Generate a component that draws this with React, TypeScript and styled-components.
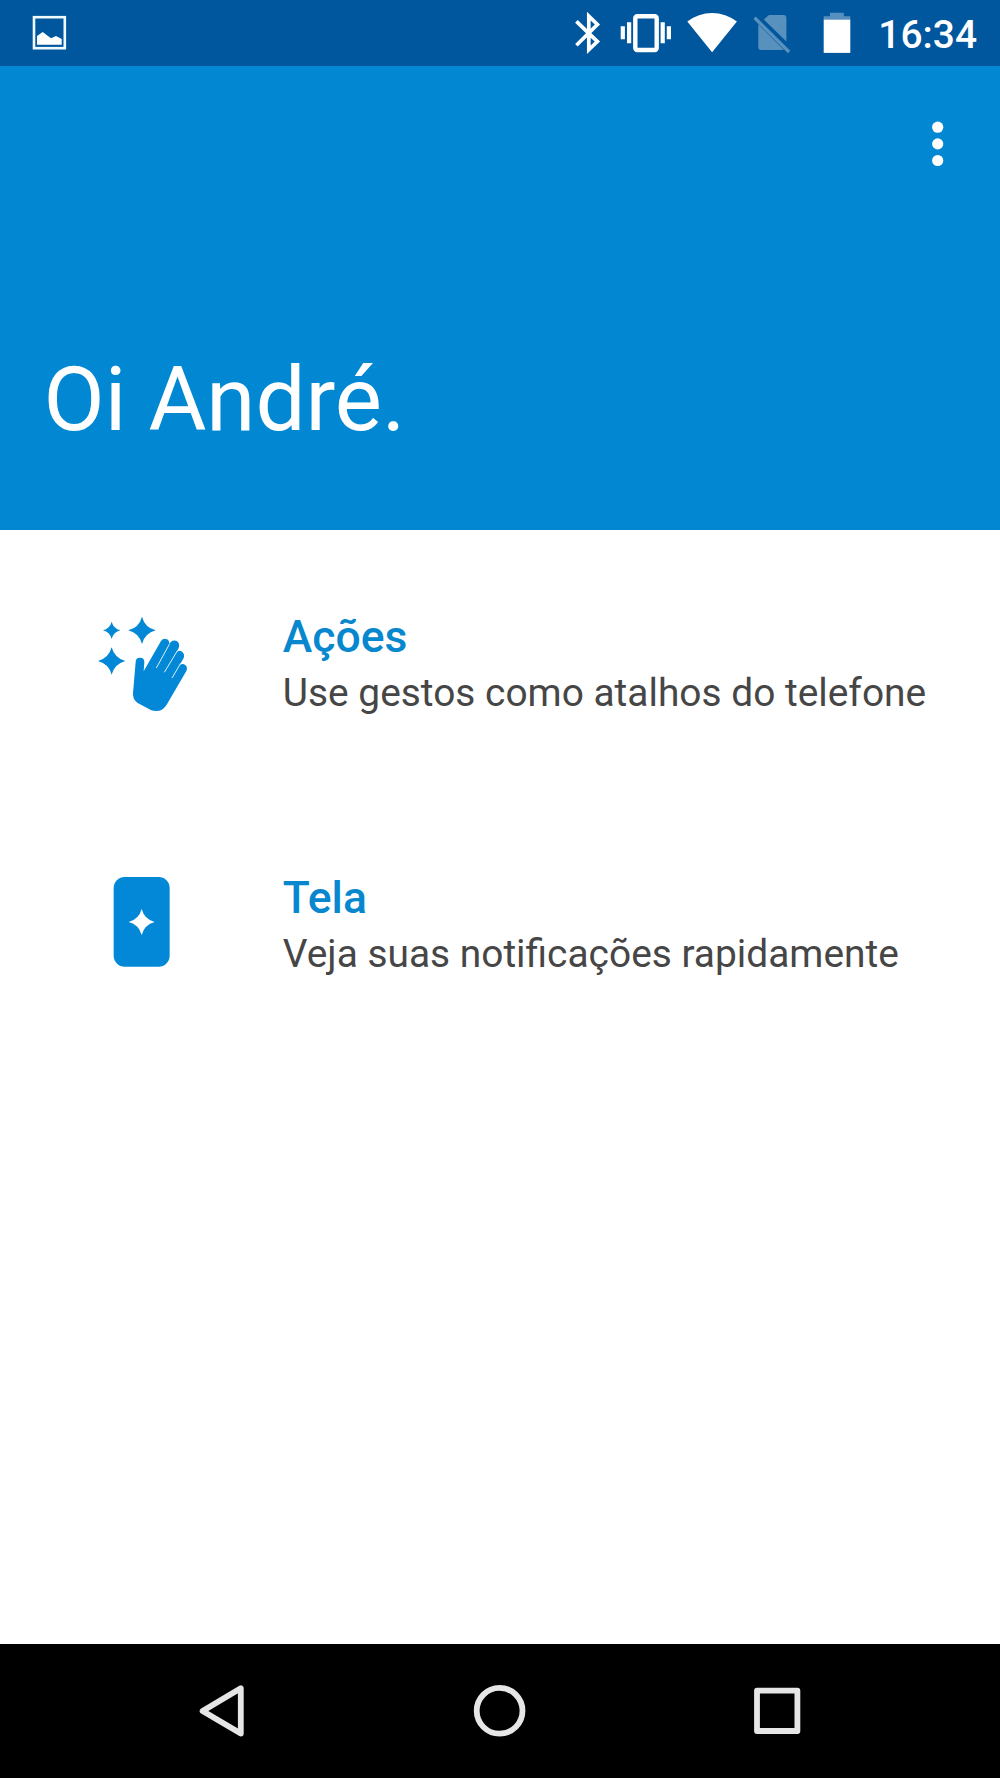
import React from 'react';
import styled, { createGlobalStyle } from 'styled-components';

const GlobalStyle = createGlobalStyle`
  * { box-sizing: border-box; }
  body { margin: 0; background: #fff; }
  h1, h2, p { margin: 0; }
`;

const Screen = styled.div`
  display: flex;
  flex-direction: column;
  width: 1000px;
  height: 1778px;
  overflow: hidden;
  background: #fff;
  font-family: Roboto, 'Liberation Sans', sans-serif;
`;

const StatusBar = styled.div`
  display: flex;
  flex: none;
  align-items: flex-start;
  height: 66px;
  padding: 0 23px 0 30px;
  background: #01579d;
  color: #fff;
`;

const StatusSpacer = styled.div`
  flex: 1;
`;

const StatusIcon = styled.svg<{ $gap?: number }>`
  display: block;
  flex: none;
  height: 66px;
  margin-right: ${({ $gap = 0 }) => $gap}px;
  fill: #fff;
`;

const Clock = styled.time`
  width: 125px;
  margin-top: 12px;
  font-size: 38.89px;
  font-weight: 500;
  line-height: 46px;
  text-align: right;
`;

const Header = styled.header`
  display: flex;
  flex: none;
  flex-direction: column;
  justify-content: space-between;
  height: 464px;
  padding: 44px 44.8px 78px 43.6px;
  background: #0288d3;
  color: #fff;
`;

const MenuButton = styled.button`
  align-self: flex-end;
  width: 34px;
  height: 68px;
  padding: 0;
  border: 0;
  background: none;

  svg {
    display: block;
    fill: #fff;
  }
`;

const Greeting = styled.h1`
  font-size: 88.89px;
  font-weight: 400;
  line-height: 104px;
`;

const FeatureList = styled.main`
  flex: 1;
`;

const Feature = styled.section`
  display: grid;
  grid-template-columns: 282.8px 1fr;
  align-items: start;
  height: 261px;
  padding-top: 71px;
`;

const FeatureIcon = styled.svg`
  display: block;
  width: 120px;
  height: 120px;
  margin-left: 82px;
  fill: #0288d6;
`;

const FeatureText = styled.div`
  display: grid;
  gap: 7px;
  padding-top: 10px;
  white-space: nowrap;
`;

const FeatureTitle = styled.h2`
  color: #0787ce;
  font-size: 44.44px;
  font-weight: 500;
  line-height: 52px;
`;

const FeatureSummary = styled.p`
  color: #464646;
  font-size: 38.89px;
  line-height: 46px;
`;

const NavBar = styled.nav`
  display: grid;
  flex: none;
  grid-template-columns: repeat(3, 278px);
  justify-content: center;
  place-items: center;
  height: 134px;
  background: #000;
`;

const NavIcon = styled.svg`
  display: block;
  width: 68px;
  height: 68px;
  fill: none;
  stroke: #e6e6e6;
  stroke-width: 5.8;
  stroke-linejoin: round;
`;

const sparkle = (cx: number, cy: number, r: number) => {
  const k = r * 0.21;
  return `M${cx} ${cy - r}Q${cx + k} ${cy - k} ${cx + r} ${cy}Q${cx + k} ${cy + k} ${cx} ${cy + r}Q${cx - k} ${cy + k} ${cx - r} ${cy}Q${cx - k} ${cy - k} ${cx} ${cy - r}Z`;
};

const PictureIcon = () => (
  <StatusIcon width="40" viewBox="30 0 40 66">
    <rect x="34" y="17.2" width="30.8" height="31" fill="none" stroke="#eefaff" strokeWidth="2.6" />
    <path d="M37 44.7V36L42.7 32L48.3 36.3L51 38.2L56 36L61.7 39V44.7Z" />
  </StatusIcon>
);

const BluetoothIcon = () => (
  <StatusIcon width="31" viewBox="572 0 31 66" $gap={15}>
    <path
      d="M576.4 21.3L597.4 41.6L588.8 49.8V16.2L597.4 24.5L576.4 45.2"
      fill="none"
      stroke="#fff"
      strokeWidth="3.7"
    />
  </StatusIcon>
);

const VibrateIcon = () => (
  <StatusIcon width="56" viewBox="618 0 56 66" $gap={11}>
    <rect x="635.3" y="16.2" width="21.4" height="33.8" rx="2" fill="none" stroke="#fff" strokeWidth="4.4" />
    <path d="M620.7 26.3h4.2v13h-4.2zM627 22.3h4.2v21H627zM660.6 22.3h4.2v21h-4.2zM666.8 26.3h4.2v13h-4.2z" />
  </StatusIcon>
);

const WifiIcon = () => (
  <StatusIcon width="55" viewBox="685 0 55 66" $gap={12}>
    <path d="M687.3 21.5A40.5 40.5 0 0 1 736.9 21.5L712.1 52.3Z" />
  </StatusIcon>
);

const NoSimIcon = () => (
  <StatusIcon width="40" viewBox="752 0 40 66" $gap={30}>
    <g opacity="0.34">
      <path d="M769 14.9H783.4Q786.4 14.9 786.4 17.9V41.5L763.8 19.4Z" />
      <path d="M758.3 24.3L784 50H761.2Q758.3 50 758.3 47Z" />
      <path d="M755.7 16.6L790.3 50.8L788 53.2L753.4 19Z" />
    </g>
  </StatusIcon>
);

const BatteryIcon = () => (
  <StatusIcon width="30" viewBox="822 0 30 66">
    <path d="M823.7 20V16.3H830V12.8H843.8V16.3H850.3V20Z" opacity="0.34" />
    <rect x="823.7" y="19.7" width="26.6" height="33.2" />
  </StatusIcon>
);

const HandIcon = () => (
  <FeatureIcon viewBox="6 3 360 360">
    <path d={sparkle(95, 91, 26)} />
    <path d={sparkle(186, 91, 41)} />
    <path d={sparkle(95, 183, 41)} />
    <path d="M167 186Q167 173 180 173Q193 173 193 186L191 214L243 123Q250 113 261 118Q271 124 266 135Q275 117 290 123Q301 130 296 144L291 155Q299 149 307 156Q315 163 311 174L299 195Q308 189 316 195Q324 202 319 213L260 314Q243 340 214 331L173 309Q158 299 159 280Z" />
    <path
      d="M268 133L229 204M293 151L253 217M302 190L276 234"
      fill="none"
      stroke="#fff"
      strokeWidth="2.6"
    />
  </FeatureIcon>
);

const DisplayIcon = () => (
  <FeatureIcon viewBox="-24 6 360 360">
    <rect x="71" y="51" width="168" height="269" rx="33" />
    <path d={sparkle(155, 186, 39)} fill="#fff" />
  </FeatureIcon>
);

const features = [
  { title: 'Ações', summary: 'Use gestos como atalhos do telefone', Icon: HandIcon },
  { title: 'Tela', summary: 'Veja suas notificações rapidamente', Icon: DisplayIcon },
];

export default function App() {
  return (
    <>
      <GlobalStyle />
      <Screen>
        <StatusBar>
          <PictureIcon />
          <StatusSpacer />
          <BluetoothIcon />
          <VibrateIcon />
          <WifiIcon />
          <NoSimIcon />
          <BatteryIcon />
          <Clock>16:34</Clock>
        </StatusBar>
        <Header>
          <MenuButton>
            <svg width="34" height="68" viewBox="0 0 34 68">
              <circle cx="16.7" cy="17.2" r="5.6" />
              <circle cx="16.7" cy="33.9" r="5.6" />
              <circle cx="16.7" cy="50.5" r="5.6" />
            </svg>
          </MenuButton>
          <Greeting>Oi André.</Greeting>
        </Header>
        <FeatureList>
          {features.map(({ title, summary, Icon }) => (
            <Feature key={title}>
              <Icon />
              <FeatureText>
                <FeatureTitle>{title}</FeatureTitle>
                <FeatureSummary>{summary}</FeatureSummary>
              </FeatureText>
            </Feature>
          ))}
        </FeatureList>
        <NavBar>
          <NavIcon viewBox="0 0 68 68">
            <path d="M14.6 33.9L52.8 11.2V56.6Z" />
          </NavIcon>
          <NavIcon viewBox="0 0 68 68">
            <circle cx="33.6" cy="33.8" r="22.9" />
          </NavIcon>
          <NavIcon viewBox="0 0 68 68">
            <rect x="13" y="13.6" width="40.4" height="40.4" />
          </NavIcon>
        </NavBar>
      </Screen>
    </>
  );
}
